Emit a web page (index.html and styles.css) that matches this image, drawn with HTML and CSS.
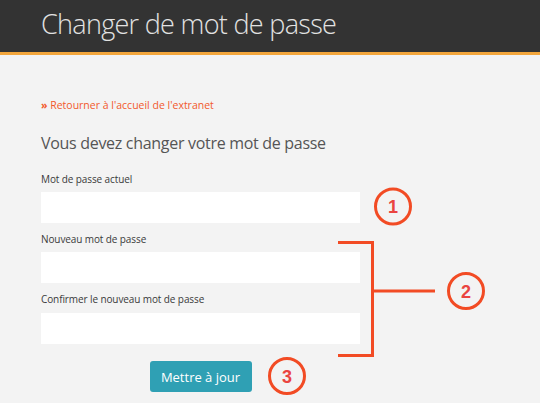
FILE: index.html
```html
<!DOCTYPE html>
<html lang="fr">
<head>
<meta charset="utf-8">
<title>Changer de mot de passe</title>
<link rel="stylesheet" href="styles.css">
</head>
<body>
<header class="topbar">
  <h1 class="title">Changer de mot de passe</h1>
</header>
<main class="content">
  <a class="back" href="#"><span class="chev">»</span> Retourner à l'accueil de l'extranet</a>
  <h2 class="subtitle">Vous devez changer votre mot de passe</h2>
  <form class="form">
    <label class="field">
      <span class="label">Mot de passe actuel</span>
      <input class="input" type="password">
    </label>
    <label class="field">
      <span class="label">Nouveau mot de passe</span>
      <input class="input" type="password">
    </label>
    <label class="field">
      <span class="label">Confirmer le nouveau mot de passe</span>
      <input class="input" type="password">
    </label>
    <div class="actions">
      <button class="btn" type="button">Mettre à jour</button>
    </div>
  </form>
</main>
<svg class="annot" width="540" height="403" viewBox="0 0 540 403">
  <g fill="none" stroke="#f24b24" stroke-width="3">
    <circle cx="393" cy="206.5" r="17.5"/>
    <circle cx="466" cy="291" r="17.5"/>
    <circle cx="287" cy="376" r="17.5"/>
    <polyline points="338,242.5 372.5,242.5 372.5,355.5 338,355.5"/>
    <line x1="372.5" y1="291" x2="435" y2="291"/>
  </g>
  <g class="num" fill="#ea4440" text-anchor="middle">
    <text x="393" y="213">1</text>
    <text x="466" y="297.5">2</text>
    <text x="287" y="382.5">3</text>
  </g>
</svg>
</body>
</html>
```
FILE: styles.css
```css
html, body {
  margin: 0;
  padding: 0;
}
body {
  background: #f3f3f3;
  font-family: "Open Sans", "Liberation Sans", sans-serif;
  width: 540px;
  height: 403px;
  overflow: hidden;
  position: relative;
}
.topbar {
  background: #333333;
  height: 52px;
  border-bottom: 3px solid #f3a63c;
  box-sizing: content-box;
  padding-left: 41px;
  display: flex;
  align-items: center;
}
.title {
  margin: 0;
  font-weight: 300;
  font-size: 27px;
  letter-spacing: -0.7px;
  color: #e2e2e2;
  line-height: 1;
  margin-top: -5px;
}
.content {
  padding: 42px 0 0 41px;
  display: flex;
  flex-direction: column;
  align-items: flex-start;
}
.back {
  color: #f2592c;
  font-size: 10.5px;
  text-decoration: none;
  line-height: 16px;
}
.chev {
  font-weight: 700;
}
.subtitle {
  margin: 18px 0 0;
  font-weight: 400;
  font-size: 16px;
  letter-spacing: -0.3px;
  color: #555555;
  line-height: 24px;
}
.form {
  margin-top: 16px;
  display: flex;
  flex-direction: column;
  width: 319px;
}
.field {
  display: flex;
  flex-direction: column;
  margin-bottom: 8px;
}
.label {
  font-size: 10px;
  letter-spacing: -0.1px;
  color: #3a3a3a;
  line-height: 16px;
  margin-bottom: 5px;
}
.input {
  height: 31px;
  border: 0;
  background: #ffffff;
  padding: 0;
  margin: 0;
  box-sizing: border-box;
  width: 319px;
}
.field + .field + .field .input {
  margin-top: 1px;
}
.actions {
  display: flex;
  justify-content: center;
  margin-top: 9px;
}
.btn {
  background: #2fa0b4;
  color: #ffffff;
  border: 0;
  border-radius: 3px;
  width: 102px;
  height: 31px;
  font-family: "Open Sans", "Liberation Sans", sans-serif;
  font-size: 13px;
  padding: 0;
}
.annot {
  position: absolute;
  left: 0;
  top: 0;
  pointer-events: none;
}
.num {
  font-family: "Liberation Sans", Arial, sans-serif;
  font-weight: 700;
  font-size: 18px;
}
```
